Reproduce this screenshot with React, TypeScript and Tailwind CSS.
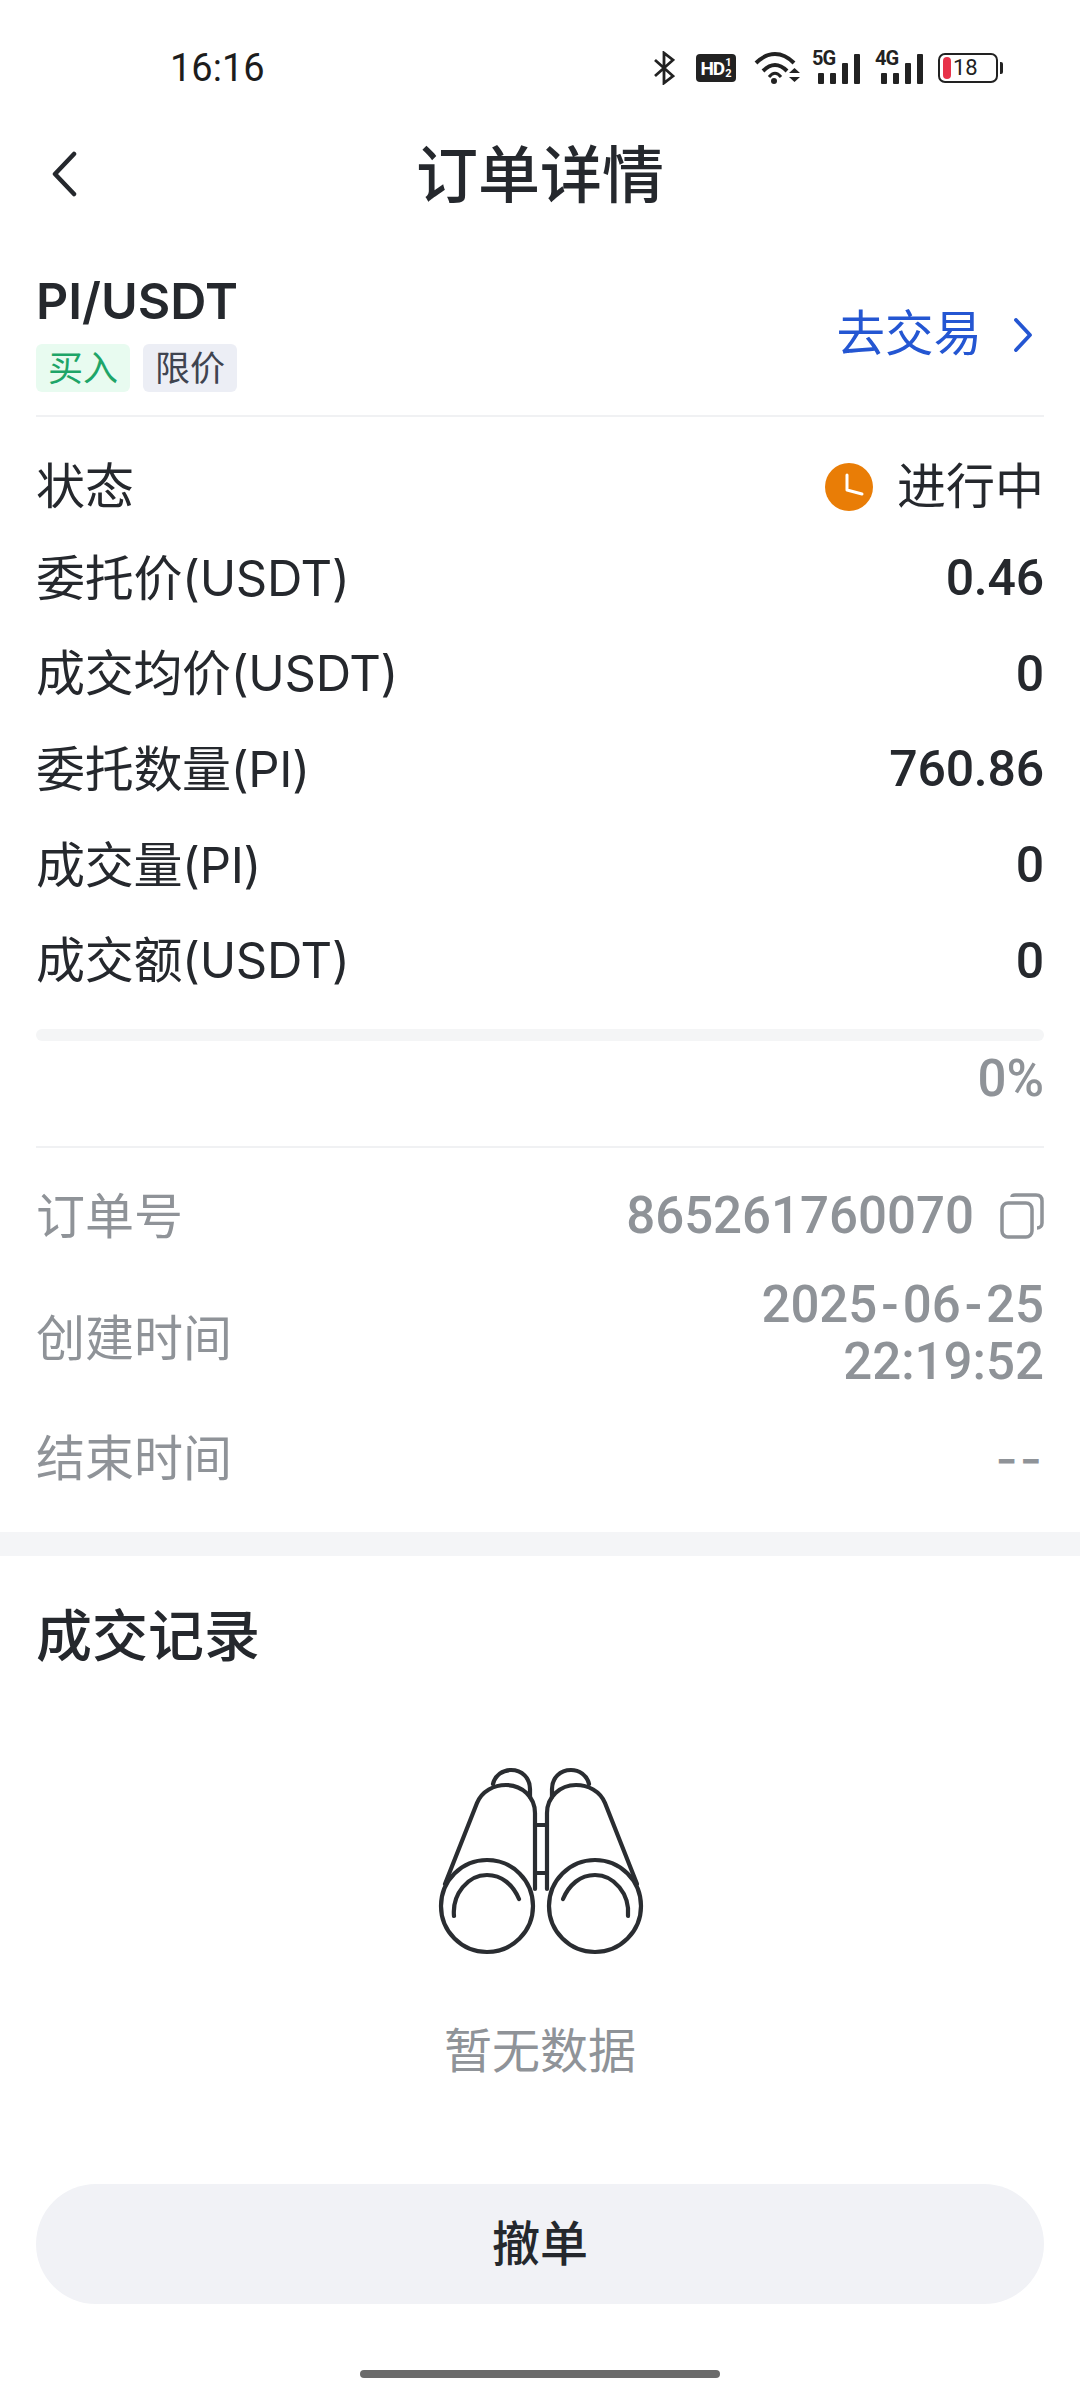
import React from "react";

function Binoculars() {
  return (
    <svg width="320" height="260" viewBox="0 0 320 260" fill="none" stroke="#2a2d31" strokeWidth="4.200" strokeLinecap="round" strokeLinejoin="round">
      <circle cx="107" cy="187" r="46" />
      <path d="M74 197C72 175 88 156 107 156C122 156 133 166 139 180" />
      <path d="M65 165L97 84C102 72 114 66 126 66C142 66 155 78 155 94V170" />
      <path d="M113 65C115 56 123 51 131 51C142 51 150 59 150 70V78" />
      <circle cx="215" cy="187" r="46" />
      <path d="M248 197C250 175 234 156 215 156C200 156 189 166 183 180" />
      <path d="M257 165L225 84C220 72 208 66 196 66C180 66 167 78 167 94V170" />
      <path d="M209 65C207 56 199 51 191 51C180 51 172 59 172 70V78" />
      <path d="M155 106H167M155 154H167" />
    </svg>
  );
}

function Signal({ label }: { label: string }) {
  return (
    <div className="relative w-[48px] h-[32px] mr-[15px]">
      <span className="absolute left-0 top-[-3px] text-[20px] leading-[18px] font-bold text-[#222] tracking-[-1px] font-[family-name:Roboto]">{label}</span>
      <div className="absolute inset-0 flex items-end justify-end gap-[6px]">
        <div className="w-[6px] h-[11px] bg-[#222] rounded-[1px]" />
        <div className="w-[6px] h-[11px] bg-[#222] rounded-[1px]" />
        <div className="w-[6px] h-[21px] bg-[#222] rounded-[1px]" />
        <div className="w-[6px] h-[30px] bg-[#222] rounded-[1px]" />
      </div>
    </div>
  );
}

function StatusIcons() {
  return (
    <div className="flex items-center">
      <svg width="22" height="34" viewBox="0 0 22 34" fill="none" stroke="#222" strokeWidth="2.800" className="mr-[21px]">
        <path d="M2 9L20 25L11 32V2L20 9L2 25" />
      </svg>
      <div className="w-[40px] h-[28px] bg-[#222] rounded-[4px] text-white flex items-center justify-center mr-[18px] font-bold font-[family-name:Roboto]">
        <span className="text-[19px] leading-none tracking-[-1px]">HD</span>
        <span className="flex flex-col text-[11px] leading-[11px] ml-[1px]"><span>1</span><span>2</span></span>
      </div>
      <svg width="46" height="34" viewBox="0 0 46 34" fill="none" className="mr-[12px]">
        <path d="M2 12C14 0 28 0 40 12" stroke="#222" strokeWidth="4" />
        <path d="M9 20C17 12 25 12 33 20" stroke="#222" strokeWidth="4" />
        <path d="M15 26C19 21 23 21 27 26" stroke="#222" strokeWidth="3" />
        <circle cx="20" cy="30" r="3" fill="#222" />
        <path d="M35 22L40.500 17L46 22ZM35 26H46L40.500 31Z" fill="#222" />
      </svg>
      <Signal label="5G" />
      <Signal label="4G" />
      <div className="relative w-[60px] h-[30px] border-[2px] border-[#222] rounded-[7px] flex items-center">
        <div className="w-[8px] h-[22px] rounded-[4px] bg-[#e8334a] ml-[3px]" />
        <span className="text-[22px] leading-none text-[#222] ml-[2px] font-[family-name:Roboto]">18</span>
        <div className="absolute right-[-7px] top-[7px] w-[3px] h-[12px] bg-[#222] rounded-r-[2px]" />
      </div>
    </div>
  );
}

function Row({ label, value }: { label: string; value: string }) {
  return (
    <div className="h-[95.700px] flex items-center justify-between text-[#25282d]">
      <span className="text-[49px] tracking-[-0.3px]">{label}</span>
      <span className="text-[50px] font-medium tracking-[-0.2px] font-[family-name:Roboto]">{value}</span>
    </div>
  );
}

export default function App() {
  return (
    <div className="w-[1080px] h-[2400px] bg-white flex flex-col overflow-hidden font-[family-name:Inter,'Noto_Sans_CJK_SC',sans-serif]">
      <div className="h-[136px] flex items-center justify-between pl-[170px] pr-[82px] shrink-0">
        <span className="text-[38px] text-[#1d1d1d] font-[family-name:Roboto]">16:16</span>
        <StatusIcons />
      </div>
      <div className="relative h-[80px] flex items-center justify-center shrink-0">
        <svg width="30" height="46" viewBox="0 0 30 46" fill="none" stroke="#25282d" strokeWidth="4.500" strokeLinecap="round" strokeLinejoin="round" className="absolute left-[50px] top-[15px]">
          <path d="M24 3L5 23L24 43" />
        </svg>
        <span className="text-[62px] font-medium text-[#25282d] leading-none">订单详情</span>
      </div>
      <div className="mx-9 h-[201px] border-b-2 border-[#f0f1f3] flex items-start justify-between shrink-0">
        <div className="flex flex-col pt-[58px]">
          <span className="text-[50px] font-semibold text-[#25282d] leading-[54px]">PI/USDT</span>
          <div className="flex gap-[13px] mt-[16px]">
            <span className="w-[94px] h-[48px] rounded-[6px] bg-[#e8fbf0] text-[#1ea568] text-[35px] flex items-center justify-center">买入</span>
            <span className="w-[94px] h-[48px] rounded-[6px] bg-[#eceef5] text-[#3f4450] text-[35px] flex items-center justify-center">限价</span>
          </div>
        </div>
        <div className="flex items-center mr-[10px] self-center mt-[38px]">
          <span className="text-[48.500px] text-[#2456d2] leading-none">去交易</span>
          <svg width="22" height="34" viewBox="0 0 22 34" fill="none" stroke="#2456d2" strokeWidth="3.800" strokeLinecap="round" strokeLinejoin="round" className="ml-[30px]">
            <path d="M4 2L18 17L4 32" />
          </svg>
        </div>
      </div>
      <div className="mx-9 flex flex-col shrink-0">
        <div className="h-[113.500px] pt-[26px] flex items-center justify-between text-[49px] text-[#25282d]">
          <span>状态</span>
          <span className="flex items-center">
            <svg width="48" height="48" viewBox="0 0 48 48" className="mr-[24px]">
              <circle cx="24" cy="24" r="24" fill="#e97d06" />
              <path d="M22 12V27L37 31" fill="none" stroke="#fff" strokeWidth="3" strokeLinecap="round" strokeLinejoin="round" />
            </svg>
            进行中
          </span>
        </div>
        <Row label="委托价(USDT)" value="0.46" />
        <Row label="成交均价(USDT)" value="0" />
        <Row label="委托数量(PI)" value="760.86" />
        <Row label="成交量(PI)" value="0" />
        <Row label="成交额(USDT)" value="0" />
      </div>
      <div className="mx-9 h-[12px] rounded-full bg-[#f4f5f6] mt-[20px] shrink-0" />
      <div className="mx-9 h-[107.500px] border-b-2 border-[#f0f1f3] text-[51px] font-medium text-[#8f9398] text-right leading-[76px] shrink-0 font-[family-name:Roboto]">0%</div>
      <div className="mx-9 flex flex-col text-[#8f9398] shrink-0">
        <div className="h-[131px] pt-[5px] flex items-center justify-between">
          <span className="text-[49px]">订单号</span>
          <span className="flex items-center text-[51px] font-medium font-[family-name:Roboto]">
            865261760070
            <svg width="44" height="46" viewBox="0 0 44 46" fill="none" stroke="#8f9398" strokeWidth="3.500" strokeLinejoin="round" className="ml-[26px]">
              <rect x="2" y="10" width="30" height="34" rx="6" />
              <path d="M12 4C12 3 13 2 15 2H36C40 2 42 4 42 8V30C42 33 40 35 37 35" />
            </svg>
          </span>
        </div>
        <div className="h-[108px] flex items-center justify-between">
          <span className="text-[49px] mt-[10px]">创建时间</span>
          <span className="text-[51px] font-medium text-right leading-[57px] font-[family-name:Roboto]">2025<span className="mx-[4px]">-</span>06<span className="mx-[4px]">-</span>25<br />22:19:52</span>
        </div>
        <div className="h-[143px] flex items-center justify-between">
          <span className="text-[49px]">结束时间</span>
          <span className="text-[48px] tracking-[2px] font-medium">--</span>
        </div>
      </div>
      <div className="h-[24px] bg-[#f4f5f7] mt-[2px] shrink-0" />
      <div className="px-9 pt-[46px] text-[56px] font-medium text-[#25282d] leading-[68px] shrink-0">成交记录</div>
      <div className="flex flex-col items-center shrink-0 mt-[49px]">
        <Binoculars />
        <span className="text-[48px] text-[#8f9398] leading-[60px] mt-[42px]">暂无数据</span>
      </div>
      <div className="mx-9 h-[120px] rounded-full bg-[#f1f2f6] flex items-center justify-center text-[48px] font-medium text-[#25282d] mt-[103px] shrink-0">撤单</div>
      <div className="mt-[66px] self-center w-[360px] h-[8px] rounded-full bg-[#6b6b6b] shrink-0" />
    </div>
  );
}
